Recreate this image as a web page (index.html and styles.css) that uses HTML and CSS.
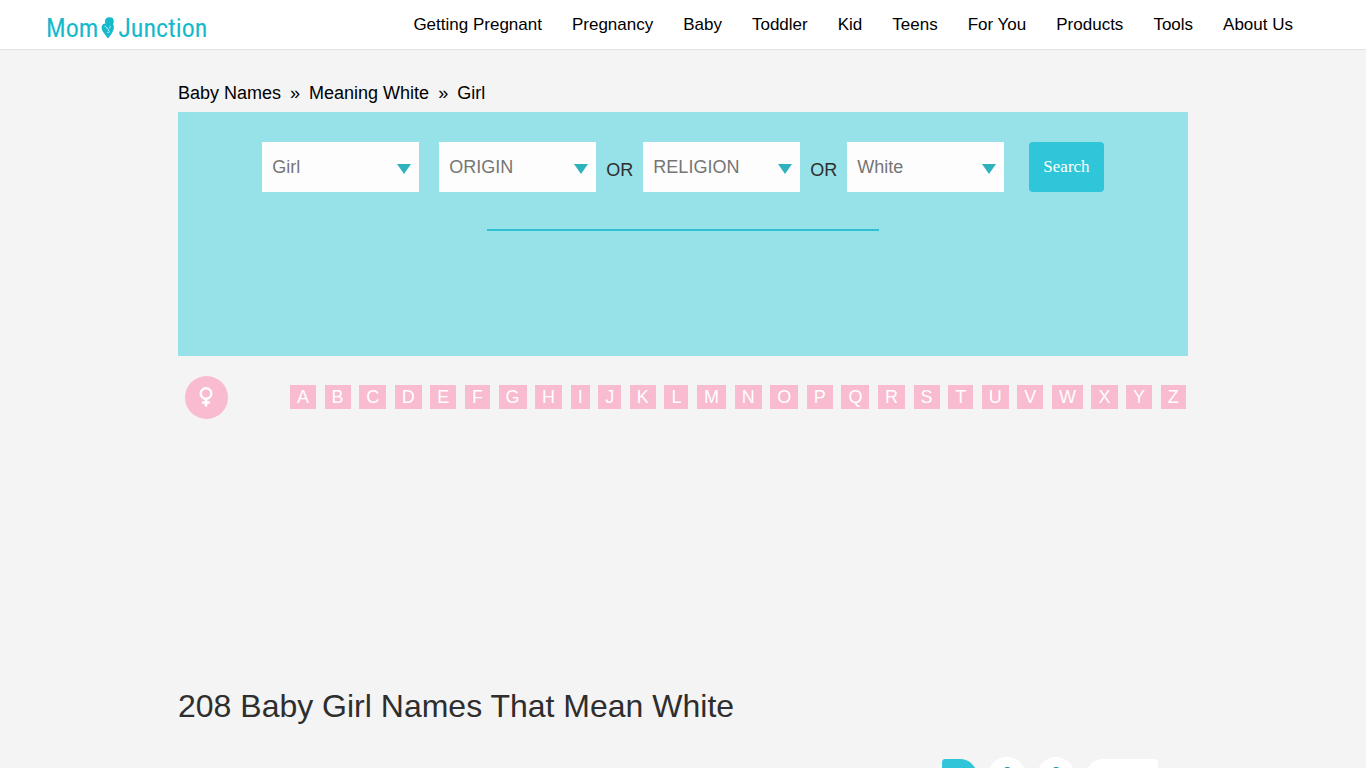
FILE: index.html
```html
<!DOCTYPE html>
<html lang="en">
<head>
  <meta charset="UTF-8">
  <meta name="viewport" content="width=device-width, initial-scale=1">
  <title>208 Baby Girl Names That Mean White</title>
  <link rel="stylesheet" href="styles.css">
</head>
<body>
  <header class="site-header">
    <a class="logo" href="#">
      <span>Mom</span>
      <svg width="14" height="22" viewBox="0 0 14 22" aria-hidden="true">
        <path d="M5 1.5C6.5 0 10 0 11.6 1C13 2.6 13.2 5.6 12 7.2C13.2 8.8 13.2 11.4 12.2 13.6C11 16.6 9 19.4 6.8 21.4C5.4 19.6 4.4 17.8 3.2 16.4C1.2 14.4 0.4 12 0.7 9.6C1 7.4 2.6 6.6 4.4 6.4C3.8 4.6 3.8 2.6 5 1.5Z" fill="#14b9cb"/>
        <path d="M3.6 9.6C4.6 9 5.8 9.8 5.6 11.2C7 11.4 7.8 12.4 7.4 14M8.8 8.8C9.6 10 8.8 11 7.8 11.6M6 14.8C6.8 16 7.8 15.6 9 14.4" fill="none" stroke="#c9f2f6" stroke-width="1"/>
      </svg>
      <span>Junction</span>
    </a>
    <nav class="main-nav">
      <a href="#">Getting Pregnant</a>
      <a href="#">Pregnancy</a>
      <a href="#">Baby</a>
      <a href="#">Toddler</a>
      <a href="#">Kid</a>
      <a href="#">Teens</a>
      <a href="#">For You</a>
      <a href="#">Products</a>
      <a href="#">Tools</a>
      <a href="#">About Us</a>
    </nav>
  </header>

  <main class="container">
    <div class="breadcrumb">
      <a href="#">Baby Names</a>
      <span>»</span>
      <a href="#">Meaning White</a>
      <span>»</span>
      <span>Girl</span>
    </div>

    <section class="search-box">
      <form class="search-form">
        <div class="select-wrap first">
          <select aria-label="Gender">
            <option>Girl</option>
            <option>Boy</option>
          </select>
        </div>
        <div class="select-wrap">
          <select aria-label="Origin">
            <option>ORIGIN</option>
          </select>
        </div>
        <span class="or">OR</span>
        <div class="select-wrap">
          <select aria-label="Religion">
            <option>RELIGION</option>
          </select>
        </div>
        <span class="or">OR</span>
        <div class="select-wrap">
          <select aria-label="Meaning">
            <option>White</option>
          </select>
        </div>
        <button type="button" class="search-btn">Search</button>
      </form>
      <hr class="divider">
    </section>

    <div class="alphabet-row">
      <a class="gender" href="#" aria-label="Girl names">
        <svg width="16" height="22" viewBox="0 0 16 22" fill="none" stroke="#fff">
          <circle cx="7" cy="6.5" r="5.3" stroke-width="2.4"/>
          <path d="M7 11.8V19.5M3 15.5H11" stroke-width="2.6"/>
        </svg>
      </a>
      <nav class="letters">
        <a href="#">A</a>
        <a href="#">B</a>
        <a href="#">C</a>
        <a href="#">D</a>
        <a href="#">E</a>
        <a href="#">F</a>
        <a href="#">G</a>
        <a href="#">H</a>
        <a href="#">I</a>
        <a href="#">J</a>
        <a href="#">K</a>
        <a href="#">L</a>
        <a href="#">M</a>
        <a href="#">N</a>
        <a href="#">O</a>
        <a href="#">P</a>
        <a href="#">Q</a>
        <a href="#">R</a>
        <a href="#">S</a>
        <a href="#">T</a>
        <a href="#">U</a>
        <a href="#">V</a>
        <a href="#">W</a>
        <a href="#">X</a>
        <a href="#">Y</a>
        <a href="#">Z</a>
      </nav>
    </div>

    <div class="ad-slot"></div>

    <h1>208 Baby Girl Names That Mean White</h1>

    <nav class="pagination">
      <a class="current" href="#">1</a>
      <a class="page" href="#">2</a>
      <a class="page" href="#">3</a>
      <a class="next" href="#">Next</a>
    </nav>
  </main>
</body>
</html>
```
FILE: styles.css
```css
* {
  box-sizing: border-box;
}

body {
  margin: 0;
  background-color: #f4f4f4;
  color: #2e2e2e;
  font-family: "Liberation Sans", Arial, sans-serif;
  font-size: 18px;
}

a {
  color: #000;
  text-decoration: none;
}

/* header */
.site-header {
  display: flex;
  justify-content: space-between;
  align-items: center;
  height: 50px;
  padding: 0 73px 0 46px;
  background-color: #fff;
  border-bottom: 1px solid #e2e2e2;
}

.logo {
  display: flex;
  align-items: center;
  gap: 3px;
  padding-top: 6px;
  color: #14b9cb;
  font-family: "Roboto Condensed", Roboto, sans-serif;
  font-size: 26px;
  line-height: 32px;
}

.main-nav {
  display: flex;
  gap: 30px;
  font-size: 17px;
}

.container {
  max-width: 1010px;
  margin: 0 auto;
}

.breadcrumb {
  display: flex;
  gap: 9px;
  padding: 32px 0 8px;
  line-height: 22px;
  color: #000;
}

/* search */
.search-box {
  min-height: 244px;
  padding-top: 30px;
  background-color: #97e1e9;
}

.search-form {
  display: flex;
  justify-content: center;
  align-items: center;
  gap: 10px;
}

.select-wrap {
  position: relative;
  width: 157px;
}

.select-wrap.first {
  margin-right: 10px;
}

.select-wrap::after {
  content: "";
  position: absolute;
  top: 22px;
  right: 8px;
  border: 7px solid transparent;
  border-top: 10px solid #2eb3be;
  border-bottom: 0;
  pointer-events: none;
}

.select-wrap select {
  display: block;
  width: 100%;
  height: 50px;
  padding: 0 30px 0 10px;
  border: 0;
  border-radius: 0;
  background-color: #fdfdfd;
  color: #757575;
  font: inherit;
  appearance: none;
}

.or {
  padding-top: 6px;
}

.search-btn {
  height: 50px;
  margin-left: 15px;
  padding: 0 14px;
  border: 0;
  border-radius: 4px;
  background-color: #30c6d9;
  color: #fff;
  font-family: "Liberation Serif", "Times New Roman", serif;
  font-size: 17px;
  cursor: pointer;
}

.divider {
  width: 392px;
  max-width: 100%;
  margin: 37px auto 0;
  border: 0;
  border-top: 2px solid #30c0d2;
}

/* letters */
.alphabet-row {
  display: flex;
  align-items: center;
  gap: 62px;
  padding: 20px 2px 0 7px;
}

.gender {
  display: flex;
  justify-content: center;
  align-items: center;
  width: 43px;
  height: 43px;
  border-radius: 50%;
  background-color: #f8bbd0;
}

.letters {
  flex: 1;
  display: flex;
  justify-content: space-between;
  padding-bottom: 2px;
}

.letters a {
  padding: 0 7px;
  background-color: #f8bbd0;
  color: #fff;
  line-height: 24px;
}

.ad-slot {
  height: 265px;
}

h1 {
  margin: 0;
  font-size: 32px;
  font-weight: 400;
  line-height: 44px;
}

/* pagination */
.pagination {
  display: flex;
  justify-content: flex-end;
  align-items: center;
  gap: 11px;
  padding: 29px 30px 30px 0;
}

.pagination a {
  height: 38px;
  color: #1f8fac;
  line-height: 34px;
  text-align: center;
}

.pagination .current {
  width: 35px;
  height: 34px;
  border-radius: 4px 20px 20px 4px;
  background-color: #30c6d9;
  color: #fff;
  line-height: 38px;
}

.pagination .page {
  width: 38px;
  border-radius: 50%;
  background-color: #fff;
}

.pagination .next {
  width: 72px;
  height: 34px;
  border-radius: 20px 4px 4px 20px;
  background-color: #fff;
}
```
